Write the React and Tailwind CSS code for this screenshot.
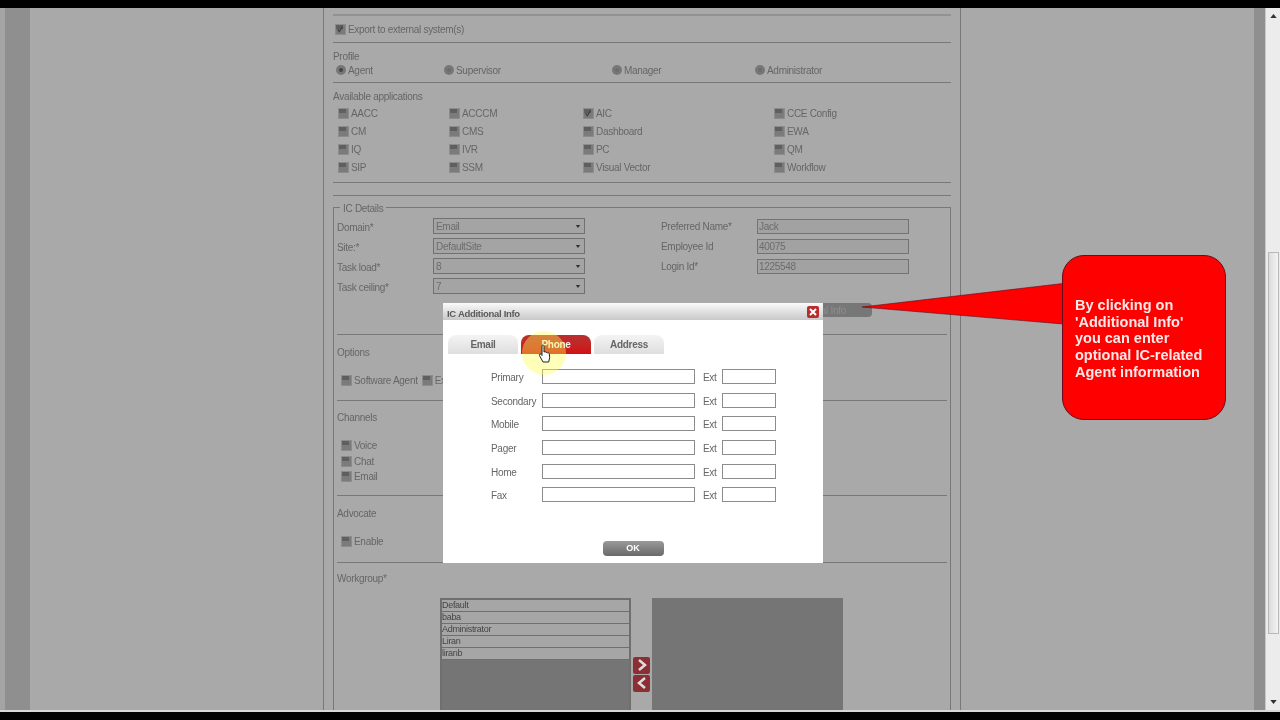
const Hr = ({ className = "" }) => <div className={`h-px bg-[#787878] ${className}`} />;

const Check = ({ checked }) => (
  <span className="relative flex h-[11px] w-[11px] shrink-0 border border-[#8c8c8c] bg-[#7b7b7b]">
    <span className="h-[4px] w-[7px] bg-[#5f5f5f]" />
    {checked && (
      <svg viewBox="0 0 11 11" className="absolute inset-0 h-[9px] w-[9px]">
        <path d="M2 5l2 3 4-6" stroke="#3f3f3f" strokeWidth="1.5" fill="none" />
      </svg>
    )}
  </span>
);

const CheckItem = ({ label, checked }) => (
  <span className="flex items-center gap-[2px]">
    <Check checked={checked} />
    <span className="whitespace-nowrap">{label}</span>
  </span>
);

const Radio = ({ label, on, className }) => (
  <span className={`flex items-center gap-[2px] ${className}`}>
    <span className="flex h-[10px] w-[10px] items-center justify-center rounded-full bg-[#777]">
      <span className={`h-[4px] w-[4px] rounded-full ${on ? "bg-[#444]" : "bg-[#6c6c6c]"}`} />
    </span>
    <span>{label}</span>
  </span>
);

const Sel = ({ value }) => (
  <div className="flex h-[16px] w-[152px] items-center justify-between border border-[#717171] bg-[#a4a4a4] pl-[2px] pr-[3px] text-[#6c6c6c]">
    <span>{value}</span>
    <svg viewBox="0 0 6 4" className="h-[3px] w-[6px]"><path d="M0 0h6L3 4z" fill="#333" /></svg>
  </div>
);

const Txt = ({ value }) => (
  <div className="flex h-[15px] w-[152px] items-center border border-[#737373] bg-[#a2a2a2] pl-px text-[#6c6c6c]">{value}</div>
);

const apps = [
  ["AACC", false], ["ACCCM", false], ["AIC", true], ["CCE Config", false],
  ["CM", false], ["CMS", false], ["Dashboard", false], ["EWA", false],
  ["IQ", false], ["IVR", false], ["PC", false], ["QM", false],
  ["SIP", false], ["SSM", false], ["Visual Vector", false], ["Workflow", false],
];

const icRows = [
  ["Domain*", "Email", "Preferred Name*", "Jack"],
  ["Site:*", "DefaultSite", "Employee Id", "40075"],
  ["Task load*", "8", "Login Id*", "1225548"],
  ["Task ceiling*", "7", "", ""],
];

const phones = ["Primary", "Secondary", "Mobile", "Pager", "Home", "Fax"];
const groups = ["Default", "baba", "Administrator", "Liran", "liranb"];

const Modal = () => (
  <div className="absolute left-[443px] top-[303px] flex h-[260px] w-[380px] flex-col bg-white text-[#666]">
    <div className="flex h-[17px] items-center justify-between bg-gradient-to-b from-[#fafafa] to-[#c8c8c8] pl-1 pr-1">
      <span className="pt-[5px] text-[9.5px] font-bold text-[#5a5a5a]">IC Additional Info</span>
      <span className="flex h-[12px] w-[12px] items-center justify-center rounded-[2px] bg-[#b92c2c]">
        <svg viewBox="0 0 8 8" className="h-[8px] w-[8px]"><path d="M1 1l6 6M7 1L1 7" stroke="#fff" strokeWidth="2" /></svg>
      </span>
    </div>
    <div className="ml-[5px] mt-[15px] flex gap-[3px] font-bold">
      <div className="flex h-[19px] w-[70px] items-center justify-center rounded-t-[8px] bg-gradient-to-b from-[#f4f4f4] to-[#dedede] text-[#666]">Email</div>
      <div className="flex h-[19px] w-[70px] items-center justify-center rounded-t-[8px] bg-gradient-to-b from-[#b83030] to-[#d01010] text-[#f2f2f2]">Phone</div>
      <div className="flex h-[19px] w-[70px] items-center justify-center rounded-t-[8px] bg-gradient-to-b from-[#f4f4f4] to-[#dedede] text-[#666]">Address</div>
    </div>
    <div className="mt-[11px] pl-[48px]">
      {phones.map((p) => (
        <div key={p} className="flex h-[23.6px] items-center">
          <span className="w-[51px] pt-[2px]">{p}</span>
          <span className="h-[15px] w-[153px] border border-[#8c8c8c] bg-white" />
          <span className="ml-[8px] w-[19px] pt-[2px]">Ext</span>
          <span className="h-[15px] w-[54px] border border-[#8c8c8c] bg-white" />
        </div>
      ))}
    </div>
    <div className="mb-[7px] mt-auto flex justify-center">
      <div className="flex h-[15px] w-[61px] items-center justify-center rounded-[4px] bg-gradient-to-b from-[#9a9a9a] to-[#6a6a6a] text-[9px] font-bold tracking-normal text-white">OK</div>
    </div>
  </div>
);

export default function App() {
  return (
    <div className="relative flex h-[720px] w-[1280px] flex-col overflow-hidden bg-black font-['Liberation_Sans',Arial,sans-serif] text-[10px] tracking-[-0.3px] text-[#666] blur-[0.35px]">
      <div className="h-[8px] shrink-0 bg-black" />
      <div className="flex min-h-0 flex-1 bg-[#a9a9a9]">
        <div className="w-[5px] shrink-0 bg-[#a4a4a4]" />
        <div className="w-[25px] shrink-0 bg-[#8f8f8f]" />
        <div className="w-[293px] shrink-0" />
        <div className="w-[638px] shrink-0 overflow-hidden border-x border-[#787878] pl-[9px] pr-[9px]">
          <div className="h-[6px]" />
          <div className="h-[2px] bg-[#929292]" />
          <div className="flex h-[26px] items-center pl-[2px]"><CheckItem label="Export to external system(s)" checked /></div>
          <Hr />
          <div className="h-[39px] pt-[8px]">
            <div className="h-[12px] leading-[12px]">Profile</div>
            <div className="flex h-[14px] items-center pl-[3px]">
              <Radio label="Agent" on className="w-[108px]" />
              <Radio label="Supervisor" className="w-[168px]" />
              <Radio label="Manager" className="w-[143px]" />
              <Radio label="Administrator" />
            </div>
          </div>
          <Hr />
          <div className="h-[99px] pt-[8px]">
            <div className="h-[12px] leading-[12px]">Available applications</div>
            <div className="mt-[1px] grid grid-cols-[111px_134px_191px_1fr] auto-rows-[18.2px] items-center pl-[5px]">
              {apps.map(([a, c]) => <CheckItem key={a} label={a} checked={c} />)}
            </div>
          </div>
          <Hr />
          <div className="h-[12px]" />
          <Hr />
          <div className="h-[5px]" />
          <fieldset className="border border-[#787878] pl-[3px] pr-[3px]">
            <legend className="ml-[3px] h-[12px] px-[3px] leading-[15px]">IC Details</legend>
            <div className="h-[3px]" />
            {icRows.map(([a, b, c, d]) => (
              <div key={a} className="flex h-[20px] items-center">
                <span className="w-[96px] pt-[2px]">{a}</span>
                <Sel value={b} />
                <span className="ml-[76px] w-[96px] pt-[1px]">{c}</span>
                {d && <Txt value={d} />}
              </div>
            ))}
            <div className="flex h-[38px] items-start justify-end pr-[75px] pt-[7px]">
              <div className="flex h-[14px] w-[100px] items-center justify-end rounded-r-[4px] bg-[#777] pr-[26px] text-[#8e8e8e]">Additional Info</div>
            </div>
            <Hr />
            <div className="flex h-[34px] items-center">Options</div>
            <div className="flex h-[22px] items-center gap-[4px] pl-[4px]">
              <CheckItem label="Software Agent" />
              <CheckItem label="Export" />
            </div>
            <div className="h-[9px]" />
            <Hr />
            <div className="flex h-[33px] items-center">Channels</div>
            <div className="h-[4px]" />
            <div className="pl-[4px]">
              <div className="flex h-[15.5px] items-center"><CheckItem label="Voice" /></div>
              <div className="flex h-[15.5px] items-center"><CheckItem label="Chat" /></div>
              <div className="flex h-[15.5px] items-center"><CheckItem label="Email" /></div>
            </div>
            <div className="h-[10px]" />
            <Hr />
            <div className="flex h-[35px] items-center">Advocate</div>
            <div className="flex h-[22px] items-center pl-[4px]"><CheckItem label="Enable" /></div>
            <div className="h-[9px]" />
            <Hr />
            <div className="flex h-[31px] items-center">Workgroup*</div>
            <div className="mt-[4px] ml-[103px] flex gap-[2px]">
              <div className="h-[140px] w-[191px] border-x-2 border-t-2 border-[#6f6f6f] bg-[#757575]">
                {groups.map((g) => (
                  <div key={g} className="flex h-[12px] items-center border-b border-[#6f6f6f] bg-[#a6a6a6] pt-[2px] text-[9px] text-[#444]">{g}</div>
                ))}
              </div>
              <div className="flex w-[17px] flex-col pt-[59px]">
                <span className="flex h-[17px] items-center justify-center rounded-[2px] bg-[#8c2f35]">
                  <svg viewBox="0 0 10 12" className="h-[12px] w-[10px]"><path d="M2 1l6 5-6 5" stroke="#ddd" strokeWidth="2.5" fill="none" /></svg>
                </span>
                <span className="mt-px flex h-[17px] items-center justify-center rounded-[2px] bg-[#8c2f35]">
                  <svg viewBox="0 0 10 12" className="h-[12px] w-[10px]"><path d="M8 1L2 6l6 5" stroke="#ddd" strokeWidth="2.5" fill="none" /></svg>
                </span>
              </div>
              <div className="h-[140px] w-[191px] bg-[#757575]" />
            </div>
          </fieldset>
        </div>
        <div className="w-[293px] shrink-0" />
        <div className="w-[11px] shrink-0 bg-[#8f8f8f]" />
        <div className="flex w-[15px] shrink-0 flex-col items-center border-l border-[#c8c8c8] bg-[#ececec]">
          <svg viewBox="0 0 8 5" className="mt-[6px] h-[4px] w-[7px]"><path d="M0 5h8L4 0z" fill="#333" /></svg>
          <div className="mt-[234px] h-[382px] w-[11px] border border-[#b8b8b8] bg-gradient-to-r from-[#dcdcdc] to-[#f4f4f4]" />
          <svg viewBox="0 0 8 5" className="mt-[66px] h-[4px] w-[7px]"><path d="M0 0h8L4 5z" fill="#333" /></svg>
        </div>
      </div>
      <div className="h-[2px] shrink-0 bg-[#d8d8d8]" />
      <div className="h-[8px] shrink-0 bg-black" />

      <Modal />

      <div className="absolute left-[522px] top-[331px] h-[44px] w-[44px] rounded-full bg-[#ffff50]/40" />
      <svg viewBox="0 0 14 19" className="absolute left-[538px] top-[344px] h-[19px] w-[14px]">
        <path d="M4 1.500c.8-.8 2-.4 2 .8V8l1-.3c.7 0 1 .4 1.200.7.6-.3 1.300 0 1.500.5.7-.2 1.500.2 1.600 1l.4 3.500-1 4.600H5L1.500 11.500c-.6-1 .5-2 1.500-1.200L4 11.500z" fill="#fff" stroke="#222" strokeWidth="1" />
      </svg>

      <svg viewBox="0 0 204 42" className="absolute left-[860px] top-[283px] h-[42px] w-[204px]">
        <path d="M203 0.500L2 24l201 17z" fill="#f00" stroke="#5a0a1a" strokeWidth="0.600" />
      </svg>
      <div className="absolute left-[1062px] top-[255px] flex h-[165px] w-[164px] items-start rounded-[22px] border border-[#6a0a1a] bg-[#f00] pl-[12px] pt-[41px] text-[14.5px] font-bold leading-[16.7px] tracking-normal text-[#fbe9e9]">
        <div>By clicking on<br />'Additional Info'<br />you can enter<br />optional IC-related<br />Agent information</div>
      </div>
    </div>
  );
}
